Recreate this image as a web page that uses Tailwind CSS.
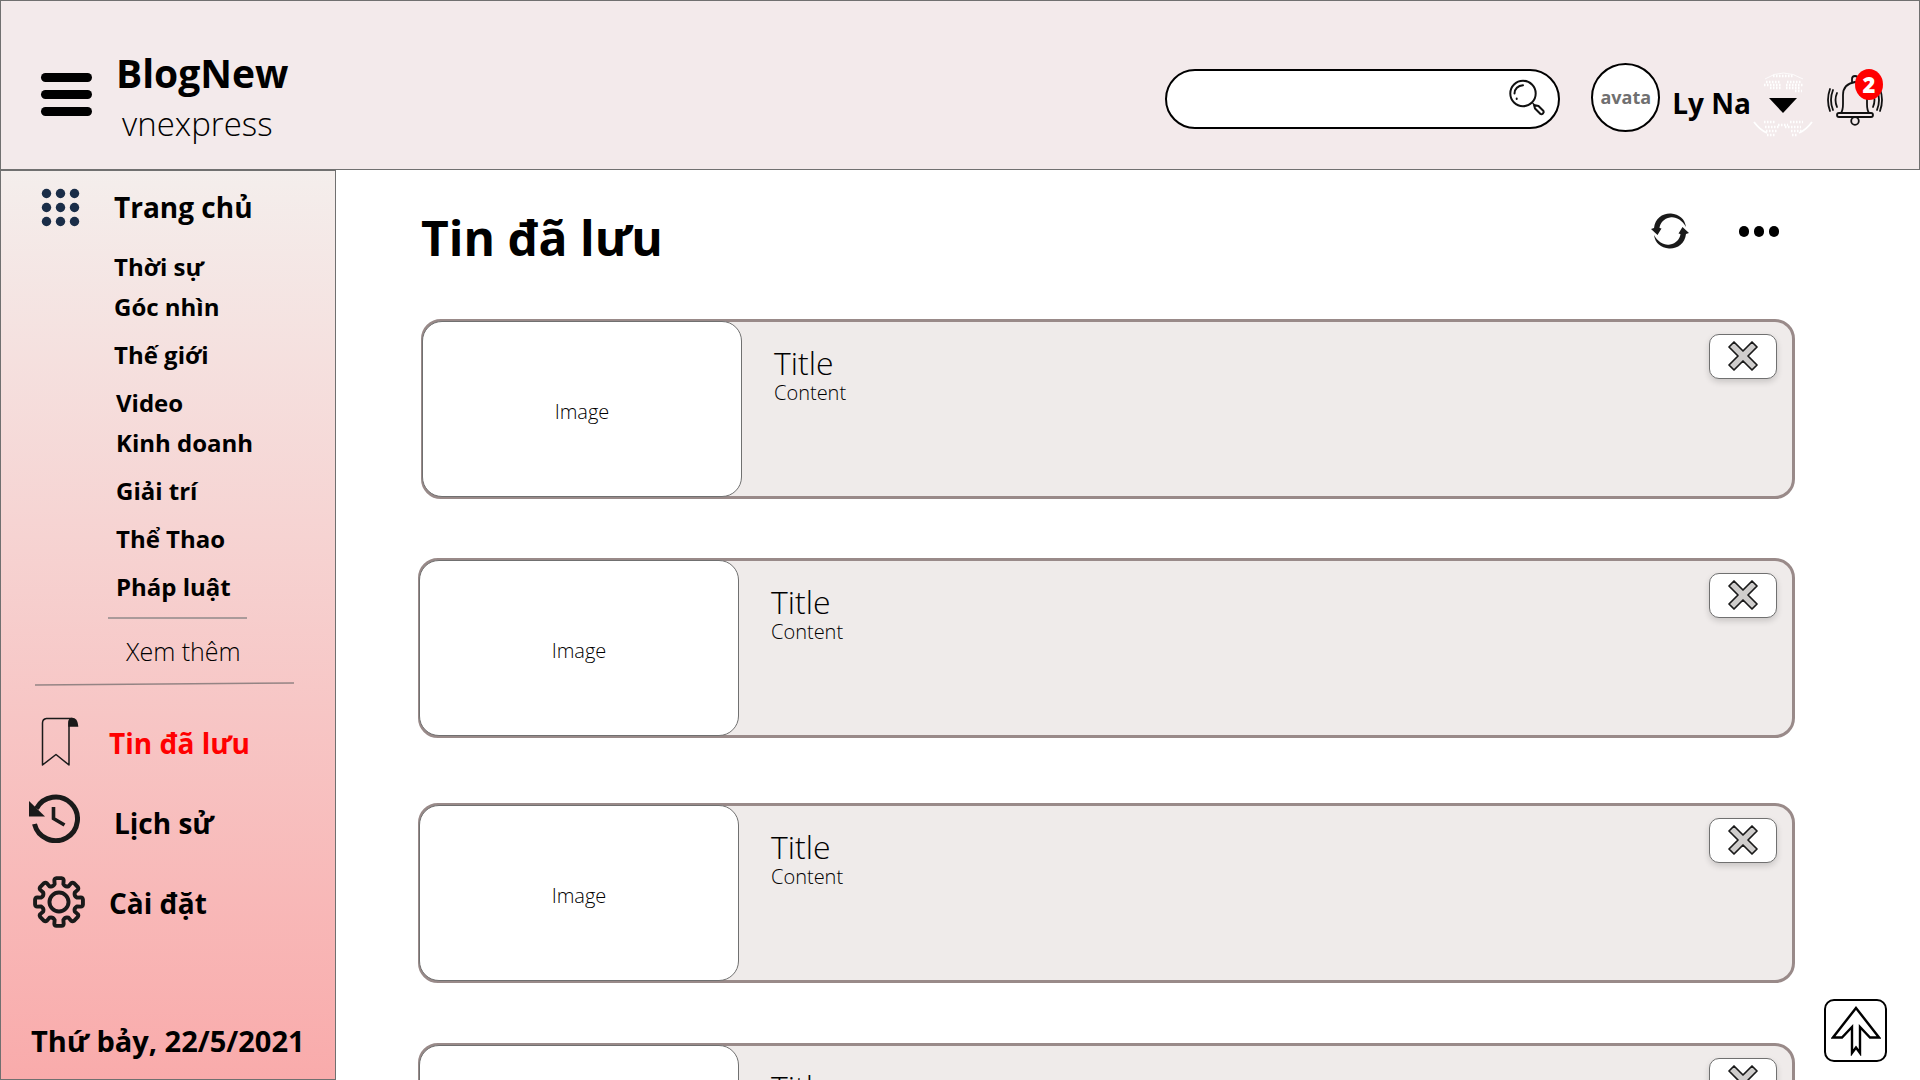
<!DOCTYPE html>
<html lang="vi">
<head>
<meta charset="utf-8">
<title>BlogNew</title>
<script src="https://cdn.jsdelivr.net/npm/@tailwindcss/browser@4"></script>
</head>
<body class="flex h-screen flex-col overflow-hidden bg-white font-['Open_Sans','Noto_Sans',sans-serif] text-black">
<header class="flex h-[170px] shrink-0 items-center justify-between border border-[#707070] bg-[#f3eaeb] pr-9 pl-10">
  <div class="flex items-center">
    <button type="button" aria-label="Menu" class="mt-[18px] flex flex-col gap-2">
      <span class="h-[9px] w-[51px] rounded-full bg-black"></span>
      <span class="h-[9px] w-[51px] rounded-full bg-black"></span>
      <span class="h-[9px] w-[51px] rounded-full bg-black"></span>
    </button>
    <div class="mt-7 ml-6">
      <a href="#" class="block text-[39px] leading-[50px] font-bold">BlogNew</a>
      <p class="pl-1.5 text-[33px] leading-[52px] font-light">vnexpress</p>
    </div>
  </div>
  <div class="mt-7 flex items-center">
    <form role="search" class="flex h-[60px] w-[395px] items-center rounded-full border-2 border-black bg-white pr-3 pl-6">
      <input type="search" aria-label="Search" class="min-w-0 flex-1 bg-transparent text-xl outline-none">
      <button type="button" aria-label="Search" class="-mt-1">
        <svg class="h-10 w-10" viewBox="0 0 40 40" fill="none" stroke="#111" stroke-linecap="round" stroke-linejoin="round">
          <circle cx="17" cy="16.500" r="12.700" stroke-width="2"/>
          <path d="M8.500 16.500C8.500 12 12 8.500 17 8.200M10.700 21.500v.4" stroke-width="2"/>
          <path d="M27 26.500l1 1" stroke-width="1.500"/>
          <path d="M28 28l4.500 1 5 5c1 1.500-1.500 4-3 3l-5.500-5.500z" stroke-width="2"/>
        </svg>
      </button>
    </form>
    <div class="-mt-1 ml-[31px] flex h-[69px] w-[69px] items-center justify-center rounded-full border-2 border-black bg-white text-lg font-bold text-[#707070]">avata</div>
    <span class="mt-2 ml-3 text-[28px] leading-10 font-bold">Ly Na</span>
    <button type="button" aria-label="Account" class="mt-4">
      <svg class="h-[72px] w-16" viewBox="0 0 64 72">
        <g fill="none" stroke="#fff">
          <path d="M14 8q18-12 38 0" stroke-width="1" opacity=".8"/>
          <path d="M22 5h20M15 11h14M36 11h14M13 14h17M35 14h17M19 17h12M35 17h15M44 20h7" stroke-width="2.500" stroke-dasharray="1.500 1.500"/>
          <path d="M13 51h12M27 54h10M39 51h13M14 56h14M34 56h16M15 60h11M40 60h11M16 64h8M41 64h6" stroke-width="2.500" stroke-dasharray="1.500 1.500"/>
          <path d="M3 51q6 8 13 11M61 51q-6 8-13 11" stroke-width="1.800"/>
        </g>
        <path d="M18 27h28L32 42z"/>
      </svg>
    </button>
    <button type="button" aria-label="Notifications" class="relative ml-3">
      <svg class="h-[60px] w-14" viewBox="0 0 56 60" fill="none" stroke="#111" stroke-width="1.800" stroke-linecap="round">
        <path d="M14 44q2-3 2-9v-9q0-11 12-13 12 2 12 13v9q0 6 2 9M25 13v-3q0-3 3-3t3 3v3"/>
        <rect x="10" y="44" width="36" height="4" rx="2"/>
        <circle cx="28" cy="52" r="3.800"/>
        <path d="M10 24q-3 7 0 14M6 21q-4 10 0 20M3 20q-4 11 0 22M46 24q3 7 0 14M50 21q4 10 0 20M53 20q4 11 0 22"/>
      </svg>
      <span class="absolute top-0 right-0 flex h-[31px] w-7 items-center justify-center rounded-[50%] bg-[#f00] text-[22px] font-extrabold text-white">2</span>
    </button>
  </div>
</header>
<div class="flex min-h-0 flex-1">
  <aside class="flex w-[336px] shrink-0 flex-col border border-[#707070] bg-linear-to-b/srgb from-[#f4eeec] to-[#f9abab]">
    <a href="#" class="mt-4 flex h-10 items-center pl-10 text-[28px] font-bold">
      <svg class="mr-[34px] h-[39px] w-[39px]" viewBox="0 0 39 39" fill="#1a2d48">
        <circle cx="5.500" cy="5.500" r="4.700"/><circle cx="19.500" cy="5.500" r="4.700"/><circle cx="33.500" cy="5.500" r="4.700"/>
        <circle cx="5.500" cy="19.500" r="4.700"/><circle cx="19.500" cy="19.500" r="4.700"/><circle cx="33.500" cy="19.500" r="4.700"/>
        <circle cx="5.500" cy="33.500" r="4.700"/><circle cx="19.500" cy="33.500" r="4.700"/><circle cx="33.500" cy="33.500" r="4.700"/>
      </svg>
      Trang chủ
    </a>
    <nav class="mt-5 pl-[113px] text-2xl leading-10 font-bold">
      <a href="#" class="block leading-10">Thời sự</a>
      <a href="#" class="block leading-10">Góc nhìn</a>
      <a href="#" class="mt-2 block leading-10">Thế giới</a>
      <div class="pl-0.5 leading-10">
        <a href="#" class="mt-2 block">Video</a>
        <a href="#" class="block">Kinh doanh</a>
        <a href="#" class="mt-2 block">Giải trí</a>
        <a href="#" class="mt-2 block">Thể Thao</a>
        <a href="#" class="mt-2 block">Pháp luật</a>
      </div>
    </nav>
    <hr class="mt-2.5 ml-[107px] w-[139px] border-t-2 border-[#aa9a9a]">
    <a href="#" class="mt-3 ml-[125px] text-[25px] leading-10 font-light">Xem thêm</a>
    <svg class="mt-[11px] ml-[34px] h-1 w-[259px]" viewBox="0 0 259 4"><path d="M0 3L259 1" stroke="#948484" stroke-width="1.600"/></svg>
    <nav class="mt-4 text-[28px] font-bold">
      <a href="#" class="flex h-20 items-center text-[#f00]">
        <svg class="ml-10 mr-[30px] h-[50px] w-[38px]" viewBox="0 0 38 50" fill="none" stroke="#1a1a1a" stroke-width="1.500">
          <path d="M1.500 48V6q0-4 4-4.500H31q-3 .5-3 5V48L15 37.500z" stroke-linejoin="round"/>
          <path d="M28 9V6q0-4.500 3-4.500 5 0 5.500 7.500z" fill="#1a1a1a"/>
        </svg>
        <span class="pt-0.5">Tin đã lưu</span>
      </a>
      <a href="#" class="flex h-20 items-center">
        <svg class="-mt-2 ml-7 mr-[34px] h-[50px] w-[51px]" viewBox="0 0 51 50">
          <path d="M7.500 15.500A21.800 21.800 0 1 1 5.500 31" fill="none" stroke="#1a1a1a" stroke-width="5"/>
          <path d="M0 8l16 15.500H0z" fill="#1a1a1a"/>
          <path d="M24.500 14v11.500l11 6.500" fill="none" stroke="#1a1a1a" stroke-width="3.600"/>
        </svg>
        <span class="pt-0.5">Lịch sử</span>
      </a>
      <a href="#" class="flex h-20 items-center">
        <svg class="ml-8 mr-6 h-[52px] w-[52px]" viewBox="0 0 24 24" fill="none" stroke="#1a1a1a" stroke-width="1.800" stroke-linejoin="round">
          <circle cx="12" cy="12" r="4.400"/>
          <path id="gear"/>
        </svg>
        <span class="pt-0.5">Cài đặt</span>
      </a>
    </nav>
    <time datetime="2021-05-22" class="mt-auto mb-[18px] pl-[30px] text-[29px] leading-10 font-bold whitespace-nowrap">Thứ bảy, 22/5/2021</time>
  </aside>
  <main class="min-w-0 flex-1 overflow-y-auto pr-[125px] pl-[82px] [scrollbar-width:none]">
    <div class="mt-8 ml-[3px] flex h-[70px] items-center justify-between">
      <h1 class="pt-0.5 text-5xl font-bold">Tin đã lưu</h1>
      <div class="-mt-3 mr-4 flex items-center gap-[50px]">
        <button type="button" aria-label="Refresh">
          <svg class="h-[38px] w-[38px]" viewBox="0 0 38 38" fill="#1a1a1a">
            <path id="half" d="M0 17l3-1C4 6 12 1 20 1.500 28 2 34 7 35 15 31 8 25 4.500 19 5.500 13 6.500 9 11 8.500 16l2 .500L6.500 23z"/>
            <use href="#half" transform="rotate(180 19 19)"/>
          </svg>
        </button>
        <button type="button" aria-label="More" class="flex gap-[5px]">
          <span class="h-[11px] w-2.5 rounded-full bg-black"></span>
          <span class="h-[11px] w-2.5 rounded-full bg-black"></span>
          <span class="h-[11px] w-2.5 rounded-full bg-black"></span>
        </button>
      </div>
    </div>
    <div id="list" class="mt-[47px] pb-16">
      <template>
        <article class="flex h-[180px] rounded-[20px] border-[3px] border-[#998a89] bg-[#efebea]">
          <div class="-my-px -ml-0.5 flex w-80 shrink-0 items-center justify-center rounded-[20px] border border-[#707070] bg-white pt-1.5 text-xl font-light">Image</div>
          <div class="mt-[21px] ml-8 flex-1">
            <h2 class="text-[32px] leading-10 font-light">Title</h2>
            <p class="text-xl leading-5 font-light">Content</p>
          </div>
          <button type="button" aria-label="Remove" class="mt-3 mr-[15px] flex h-[45px] w-[68px] items-center justify-center rounded-[10px] border border-[#707070] bg-white pb-0.5 shadow-[0_3px_6px_rgba(0,0,0,0.16)]">
            <svg class="h-[30px] w-[30px]" viewBox="0 0 30 30"><path d="M6 1l9 9 9-9 5 5-9 9 9 9-5 5-9-9-9 9-5-5 9-9-9-9z" fill="#cfcdcc" stroke="#1a1a1a" stroke-width="1.700" stroke-linejoin="round"/></svg>
          </button>
        </article>
      </template>
    </div>
  </main>
</div>
<button type="button" aria-label="Back to top" class="fixed right-[33px] bottom-[18px] flex h-[63px] w-[63px] items-center justify-center rounded-[10px] border-2 border-black bg-white">
  <svg class="h-[50px] w-[50px]" viewBox="0 0 50 50" fill="none" stroke="#000" stroke-width="2.400"><path d="M25 2L48 31.500H39L29 21V47L25 41.500 21 47V21L11 31.500H2z"/></svg>
</button>
<script>
  // Saved articles; each entry holds the spacing of its card.
  const list = document.getElementById('list');
  const template = list.querySelector('template');
  for (const spacing of ['ml-[3px]', 'mt-[59px]', 'mt-[65px]', 'mt-[60px]']) {
    const card = template.content.firstElementChild.cloneNode(true);
    card.classList.add(spacing);
    list.append(card);
  }
  // Eight-toothed gear outline: rounded tooth tips joined by rounded valleys.
  const at = (r, a) => (12 + r * Math.cos(a)).toFixed(2) + ' ' + (12 + r * Math.sin(a)).toFixed(2);
  let d = '';
  for (let i = 0; i < 8; i++) {
    const a = i * Math.PI / 4;
    d += (i ? 'L' : 'M') + at(8.5, a - 0.24) + 'L' + at(10.3, a - 0.21) + 'Q' + at(11.1, a - 0.19) + ' ' + at(11.1, a - 0.1)
      + 'L' + at(11.1, a + 0.1) + 'Q' + at(11.1, a + 0.19) + ' ' + at(10.3, a + 0.21) + 'L' + at(8.5, a + 0.24)
      + 'Q' + at(7.4, a + Math.PI / 8) + ' ' + at(8.5, a + Math.PI / 4 - 0.24);
  }
  document.getElementById('gear').setAttribute('d', d + 'z');
</script>
</body>
</html>
